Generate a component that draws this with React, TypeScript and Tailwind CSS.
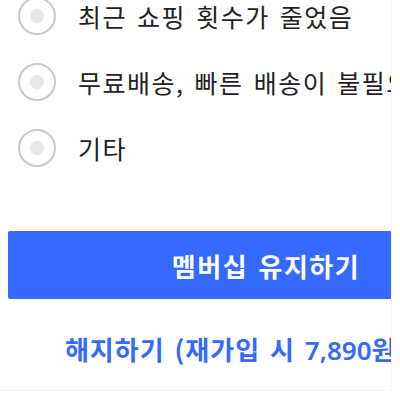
import React from "react";

const reasons = ["최근 쇼핑 횟수가 줄었음", "무료배송, 빠른 배송이 불필요해짐", "기타"];

function Radio() {
  return (
    <span className="flex h-[38px] w-[38px] flex-none items-center justify-center rounded-full border-2 border-[#c6c9ce] bg-white">
      <span className="h-[14px] w-[14px] rounded-full bg-[#e4e7eb]" />
    </span>
  );
}

export default function App() {
  return (
    <div className="h-[400px] w-[400px] overflow-hidden bg-white" style={{ fontFamily: '"Noto Sans CJK KR", "Noto Sans", sans-serif' }}>
      <div className="h-[391px] w-[392px] overflow-hidden border-r border-b border-[#f6f6f6]">
        <div className="-mt-[17px] w-[532px] px-2">
          {/* reasons */}
          <ul className="pl-[10px]">
            {reasons.map((r) => (
              <li key={r} className="flex h-[66px] items-center gap-[22px]">
                <Radio />
                <span className="whitespace-nowrap text-[25px] leading-none tracking-[1.5px] text-[#222] [word-spacing:3px]">{r}</span>
              </li>
            ))}
          </ul>

          {/* actions */}
          <button className="mt-[50px] flex h-[68px] w-[516px] items-center justify-center rounded-[2px] bg-[#346aff] text-[26px] font-bold tracking-[1.5px] text-white [word-spacing:3px]">
            멤버십 유지하기
          </button>
          <p className="mt-[35px] w-[516px] whitespace-nowrap text-center text-[26px] font-semibold leading-[30px] tracking-[1px] text-[#346aff] [word-spacing:3px]">
            해지하기 (재가입 시{" "}
            <span className="font-['Noto_Sans',sans-serif] tracking-normal">7,890</span>원 결제)
          </p>
        </div>
      </div>
    </div>
  );
}
